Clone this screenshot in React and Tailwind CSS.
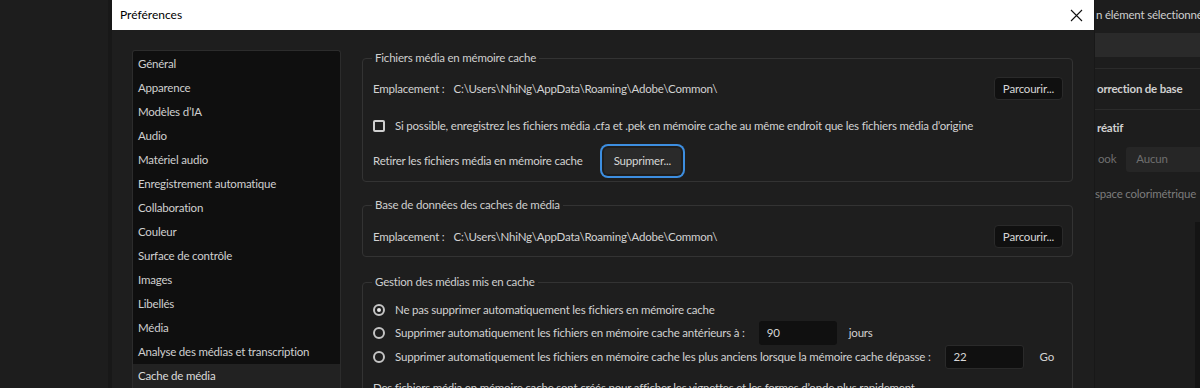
import React from 'react';

const navItems = [
  'Général',
  'Apparence',
  'Modèles d’IA',
  'Audio',
  'Matériel audio',
  'Enregistrement automatique',
  'Collaboration',
  'Couleur',
  'Surface de contrôle',
  'Images',
  'Libellés',
  'Média',
  'Analyse des médias et transcription',
  'Cache de média',
];

const PATH = 'C:\\Users\\NhiNg\\AppData\\Roaming\\Adobe\\Common\\';

const Radio = ({ checked }) => (
  <span className="flex h-[12px] w-[12px] shrink-0 items-center justify-center rounded-full border-2 border-[#c4c4c4] bg-[#1e1e1e]">
    {checked && <span className="h-[4px] w-[4px] rounded-full bg-[#e8e8e8]" />}
  </span>
);

const Button = ({ children, focused }) => (
  <button
    type="button"
    className={`rounded-[4px] text-[11.5px] tracking-[-0.2px] text-[#d6d6d6] ${
      focused
        ? 'h-[26px] bg-[#2a2a2a] px-[10px] ring-2 ring-[#3d8ee0] ring-offset-2 ring-offset-[#1e1e1e]'
        : 'h-[23px] border border-[#2a2a2a] bg-[#101010] px-[8px]'
    }`}
  >
    {children}
  </button>
);

const Group = ({ title, className, children }) => (
  <fieldset className={`rounded-[4px] border border-[#333333] pl-[10px] pr-[9px] ${className}`}>
    <legend className="ml-[-1px] px-[3px] text-[11.5px] leading-[16px] text-[#cfcfcf]">{title}</legend>
    {children}
  </fieldset>
);

export default function App() {
  return (
    <div
      className="flex h-[388px] w-[1200px] overflow-hidden bg-[#1d1d1d] text-[11.5px] tracking-[-0.2px] text-[#d2d2d2]"
      style={{ fontFamily: 'Lato, "Open Sans", sans-serif' }}
    >
      {/* app behind, left */}
      <div className="w-[112px] shrink-0 border-r-[4px] border-[#181818] bg-[#1d1d1d]" />

      {/* dialog */}
      <div className="flex w-[982px] shrink-0 flex-col bg-[#1e1e1e]">
        <div className="flex h-[30px] shrink-0 items-center justify-between bg-white pl-[8px] pr-[10px]">
          <span className="text-[12px] tracking-normal text-black">Préférences</span>
          <svg width="13" height="13" viewBox="0 0 13 13" className="mr-[1px]">
            <path d="M1 1 L12 12 M12 1 L1 12" stroke="#111" strokeWidth="1.1" />
          </svg>
        </div>

        <div className="flex min-h-0 flex-1 gap-[21px] pl-[20px] pr-[21px] pt-[20px]">
          {/* nav list */}
          <div className="w-[209px] shrink-0 rounded-t-[3px] border border-b-0 border-[#2c2c2c] bg-[#0f0f0f] pt-[1px]">
            {navItems.map((item) => (
              <div
                key={item}
                className={`flex h-[24px] items-center px-[5px] ${
                  item === 'Cache de média' ? 'bg-[#222222] text-[#dcdcdc]' : 'text-[#cfcfcf]'
                }`}
              >
                {item}
              </div>
            ))}
          </div>

          {/* settings */}
          <div className="flex w-[711px] shrink-0 flex-col">
            <Group title="Fichiers média en mémoire cache" className="pb-[5px]">
              <div className="mt-[11px] flex h-[23px] items-center justify-between">
                <span>
                  Emplacement :<span className="ml-[9px]">{PATH}</span>
                </span>
                <Button>Parcourir...</Button>
              </div>
              <div className="mt-[16px] flex h-[20px] items-center gap-[10px]">
                <span className="h-[12px] w-[12px] shrink-0 rounded-[2px] border-2 border-[#cfcfcf] bg-[#1e1e1e]" />
                <span>
                  Si possible, enregistrez les fichiers média .cfa et .pek en mémoire cache au même endroit que les fichiers média d’origine
                </span>
              </div>
              <div className="mt-[10px] flex h-[30px] items-center gap-[21px]">
                <span>Retirer les fichiers média en mémoire cache</span>
                <Button focused>Supprimer...</Button>
              </div>
            </Group>

            <Group title="Base de données des caches de média" className="mt-[15px] pb-[8px]">
              <div className="mt-[12px] flex h-[23px] items-center justify-between">
                <span>
                  Emplacement :<span className="ml-[9px]">{PATH}</span>
                </span>
                <Button>Parcourir...</Button>
              </div>
            </Group>

            <Group title="Gestion des médias mis en cache" className="mt-[17px] pb-[8px]">
              <div className="mt-[8px] flex h-[23px] items-center gap-[10px]">
                <Radio checked />
                <span>Ne pas supprimer automatiquement les fichiers en mémoire cache</span>
              </div>
              <div className="flex h-[24px] items-center gap-[10px]">
                <Radio />
                <span>Supprimer automatiquement les fichiers en mémoire cache antérieurs à :</span>
                <div className="ml-[4px] flex h-[24px] w-[78px] items-center rounded-[3px] bg-[#101010] px-[8px] text-[#d6d6d6]">90</div>
                <span className="ml-[2px]">jours</span>
              </div>
              <div className="flex h-[24px] items-center gap-[10px]">
                <Radio />
                <span>Supprimer automatiquement les fichiers en mémoire cache les plus anciens lorsque la mémoire cache dépasse :</span>
                <div className="ml-[4px] flex h-[24px] w-[79px] items-center rounded-[3px] border border-[#2a2a2a] bg-[#101010] px-[8px] text-[#d6d6d6]">22</div>
                <span className="ml-[6px]">Go</span>
              </div>
              <div className="mt-[10px] h-[18px]">
                Des fichiers média en mémoire cache sont créés pour afficher les vignettes et les formes d’onde plus rapidement.
              </div>
            </Group>
          </div>
        </div>
      </div>

      {/* app behind, right */}
      <div className="flex min-w-0 flex-1 flex-col overflow-hidden whitespace-nowrap border-l border-[#181818] bg-[#1d1d1d]">
        <div className="flex h-[30px] items-center pl-[1px] text-[#cfcfcf]">n élément sélectionné</div>
        <div className="mt-[3px] h-[24px] bg-[#2a2a2a]" />
        <div className="mt-[11px] border-t border-[#2b2b2b]" />
        <div className="flex h-[40px] items-center pl-[2px] font-bold text-[#d0d0d0]">orrection de base</div>
        <div className="border-t border-[#2b2b2b]" />
        <div className="flex h-[36px] items-center pl-[2px] font-bold text-[#d0d0d0]">réatif</div>
        <div className="flex h-[26px] items-center gap-[10px] pl-[3px] text-[#6f6f6f]">
          <span>ook</span>
          <div className="flex h-[25px] flex-1 items-center rounded-l-[3px] bg-[#262626] pl-[10px]">Aucun</div>
        </div>
        <div className="mt-[12px] flex h-[20px] items-center text-[#7c7c7c]">space colorimétrique</div>
        <div className="mt-[18px] flex flex-1 justify-end">
          <div className="w-[5px] bg-[#141414]" />
        </div>
      </div>
    </div>
  );
}
